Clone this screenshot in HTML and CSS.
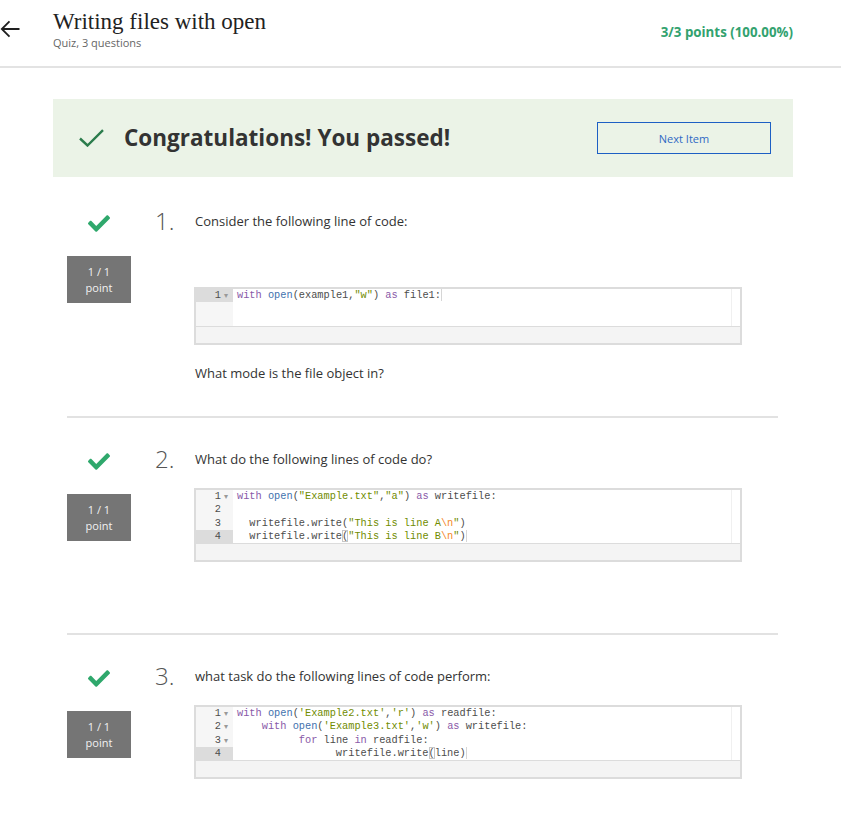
FILE: index.html
```html
<!DOCTYPE html>
<html lang="en">
<head>
<meta charset="utf-8">
<title>Writing files with open</title>
<link rel="stylesheet" href="styles.css">
</head>
<body>
<header class="top">
  <a class="back" aria-label="Back">
    <svg width="20" height="18" viewBox="0 0 20 18"><path d="M19.5 9H1.8M9.5 1.3L1.8 9l7.7 7.7" fill="none" stroke="#1f1f1f" stroke-width="1.8"/></svg>
  </a>
  <div class="title-block">
    <h1 class="title">Writing files with open</h1>
    <div class="subtitle">Quiz, 3 questions</div>
  </div>
  <div class="score">3/3 points (100.00%)</div>
</header>

<main class="main">
  <section class="banner">
    <svg class="banner-check" width="25" height="18" viewBox="0 0 25 18"><polyline points="1,9.5 8.5,16.5 24,1.2" fill="none" stroke="#2b7c4c" stroke-width="2.4"/></svg>
    <h2 class="banner-text">Congratulations! You passed!</h2>
    <button class="next-btn">Next Item</button>
  </section>

  <div class="questions">
    <div class="q">
      <div class="q-side">
        <svg class="q-check" width="22" height="17" viewBox="0 64 512 384"><path fill="#2fa86c" d="M173.9 439.4l-166.4-166.4c-10-10-10-26.2 0-36.2l36.2-36.2c10-10 26.2-10 36.2 0L192 312.7 432.1 72.6c10-10 26.2-10 36.2 0l36.2 36.2c10 10 10 26.2 0 36.2l-294.4 294.4c-10 10-26.2 10-36.2 0z"/></svg>
        <div class="point"><span>1 / 1</span><span>point</span></div>
      </div>
      <div class="q-main">
        <div class="q-head"><span class="q-num">1.</span><div class="q-text">Consider the following line of code:</div></div>
        <div class="q-body">
          <p class="blank"></p>
          <div class="editor">
            <div class="code code-short">
              <div class="gutter">
                <div class="g-cell active"><span>1</span><span class="fold">▾</span></div>
              </div>
              <div class="lines">
                <div class="line"><span class="k">with</span> <span class="f">open</span>(example1,<span class="s">"w"</span>) <span class="k">as</span> file1:<span class="cursor"></span></div>
              </div>
              <div class="scroll"></div>
            </div>
            <div class="ed-foot"></div>
          </div>
          <p class="after">What mode is the file object in?</p>
        </div>
      </div>
    </div>

    <div class="q">
      <div class="q-side">
        <svg class="q-check" width="22" height="17" viewBox="0 64 512 384"><path fill="#2fa86c" d="M173.9 439.4l-166.4-166.4c-10-10-10-26.2 0-36.2l36.2-36.2c10-10 26.2-10 36.2 0L192 312.7 432.1 72.6c10-10 26.2-10 36.2 0l36.2 36.2c10 10 10 26.2 0 36.2l-294.4 294.4c-10 10-26.2 10-36.2 0z"/></svg>
        <div class="point"><span>1 / 1</span><span>point</span></div>
      </div>
      <div class="q-main">
        <div class="q-head"><span class="q-num">2.</span><div class="q-text">What do the following lines of code do?</div></div>
        <div class="q-body">
          <div class="editor">
            <div class="code">
              <div class="gutter">
                <div class="g-cell"><span>1</span><span class="fold">▾</span></div>
                <div class="g-cell"><span>2</span><span class="fold"></span></div>
                <div class="g-cell"><span>3</span><span class="fold"></span></div>
                <div class="g-cell active"><span>4</span><span class="fold"></span></div>
              </div>
              <div class="lines">
                <div class="line"><span class="k">with</span> <span class="f">open</span>(<span class="s">"Example.txt"</span>,<span class="s">"a"</span>) <span class="k">as</span> writefile:</div>
                <div class="line"> </div>
                <div class="line">  writefile.write(<span class="s">"This is line A</span><span class="e">\n</span><span class="s">"</span>)</div>
                <div class="line">  writefile.write<span class="br">(</span><span class="s">"This is line B</span><span class="e">\n</span><span class="s">"</span>)<span class="cursor"></span></div>
              </div>
              <div class="scroll"></div>
            </div>
            <div class="ed-foot"></div>
          </div>
          <p class="after"></p>
        </div>
      </div>
    </div>

    <div class="q">
      <div class="q-side">
        <svg class="q-check" width="22" height="17" viewBox="0 64 512 384"><path fill="#2fa86c" d="M173.9 439.4l-166.4-166.4c-10-10-10-26.2 0-36.2l36.2-36.2c10-10 26.2-10 36.2 0L192 312.7 432.1 72.6c10-10 26.2-10 36.2 0l36.2 36.2c10 10 10 26.2 0 36.2l-294.4 294.4c-10 10-26.2 10-36.2 0z"/></svg>
        <div class="point"><span>1 / 1</span><span>point</span></div>
      </div>
      <div class="q-main">
        <div class="q-head"><span class="q-num">3.</span><div class="q-text">what task do the following lines of code perform:</div></div>
        <div class="q-body">
          <div class="editor">
            <div class="code">
              <div class="gutter">
                <div class="g-cell"><span>1</span><span class="fold">▾</span></div>
                <div class="g-cell"><span>2</span><span class="fold">▾</span></div>
                <div class="g-cell"><span>3</span><span class="fold">▾</span></div>
                <div class="g-cell active"><span>4</span><span class="fold"></span></div>
              </div>
              <div class="lines">
                <div class="line"><span class="k">with</span> <span class="f">open</span>(<span class="s">'Example2.txt'</span>,<span class="s2">'r'</span>) <span class="k">as</span> readfile:</div>
                <div class="line">    <span class="k">with</span> <span class="f">open</span>(<span class="s">'Example3.txt'</span>,<span class="s2">'w'</span>) <span class="k">as</span> writefile:</div>
                <div class="line">          <span class="k">for</span> line <span class="k">in</span> readfile:</div>
                <div class="line">                writefile.write<span class="br">(</span>line)<span class="cursor"></span></div>
              </div>
              <div class="scroll"></div>
            </div>
            <div class="ed-foot"></div>
          </div>
        </div>
      </div>
    </div>
  </div>
</main>
</body>
</html>
```

FILE: styles.css
```css
* { box-sizing: border-box; }

body {
  margin: 0;
  background: #fff;
  font-family: "Open Sans", "Noto Sans", sans-serif;
  color: #333;
}

/* header */
.top {
  display: flex;
  align-items: flex-start;
  height: 68px;
  border-bottom: 2px solid #e3e3e3;
}
.back {
  width: 53px;
  flex: none;
  padding-top: 20px;
  padding-left: 0;
  display: block;
  line-height: 0;
}
.title-block {
  flex: 1;
  padding-top: 9px;
}
.title {
  margin: 0;
  font-family: "Liberation Serif", "DejaVu Serif", serif;
  font-weight: 400;
  font-size: 23px;
  line-height: 26px;
  color: #222;
}
.subtitle {
  margin-top: 0;
  font-size: 11px;
  line-height: 15px;
  color: #666;
}
.score {
  margin-top: 23px;
  padding-right: 48px;
  font-size: 13.3px;
  line-height: 18px;
  font-weight: 700;
  color: #33a26f;
}

/* main */
.main {
  margin-left: 53px;
  width: 740px;
}
.banner {
  margin-top: 31px;
  height: 78px;
  background: #ebf3e7;
  display: flex;
  align-items: center;
  padding: 0 22px 0 26px;
}
.banner-check { flex: none; }
.banner-text {
  margin: 0 auto 0 20px;
  font-size: 22.5px;
  font-weight: 700;
  color: #333;
  line-height: 30px;
}
.next-btn {
  width: 174px;
  height: 32px;
  border: 1px solid #1d5fc4;
  background: transparent;
  font-family: "Open Sans", sans-serif;
  font-size: 11px;
  color: #3069c4;
  padding: 0;
}

/* questions */
.questions {
  margin-left: 14px;
  width: 711px;
  padding-top: 3px;
}
.q {
  display: flex;
  padding-top: 27px;
  border-bottom: 2px solid #e2e2e2;
}
.q:last-child { border-bottom: none; }
.q-side {
  width: 64px;
  flex: none;
  display: flex;
  flex-direction: column;
  align-items: center;
}
.q-check { margin-top: 8px; display: block; }
.point {
  margin-top: 24px;
  width: 64px;
  height: 47px;
  background: #757575;
  color: #f2f2f2;
  font-size: 11px;
  line-height: 16px;
  display: flex;
  flex-direction: column;
  justify-content: center;
  align-items: center;
}
.q-main {
  margin-left: 24px;
  flex: 1;
}
.q-head {
  display: flex;
  align-items: center;
  height: 28px;
}
.q-num {
  width: 40px;
  flex: none;
  font-weight: 300;
  font-size: 24px;
  line-height: 28px;
  color: #555;
}
.q-text {
  font-size: 13px;
  line-height: 20px;
  color: #333;
}
.q-body {
  padding-left: 40px;
  padding-bottom: 33px;
}
.blank { margin: 0; height: 37px; }
.after {
  margin: 18px 0 0;
  height: 20px;
  font-size: 13px;
  line-height: 20px;
  color: #333;
}

/* editor */
.editor {
  margin-top: 15px;
  margin-left: -1px;
  width: 548px;
  border: 2px solid #dcdcdc;
}
.code { display: flex; }
.code-short { min-height: 37px; }
.gutter {
  width: 37px;
  flex: none;
  background: #f6f6f6;
}
.g-cell {
  height: 13.25px;
  display: flex;
  justify-content: flex-end;
  font-family: "Liberation Mono", "DejaVu Sans Mono", monospace;
  font-size: 10.3px;
  line-height: 13.25px;
  color: #4d4d4c;
}
.g-cell.active { background: #dcdcdc; }
.fold {
  width: 12px;
  padding-left: 3px;
  font-family: "DejaVu Sans", sans-serif;
  font-size: 8px;
  color: #999;
  text-align: left;
}
.lines {
  flex: 1;
  padding-left: 4px;
  background: #fff;
}
.line {
  height: 13.25px;
  white-space: pre;
  font-family: "Liberation Mono", "DejaVu Sans Mono", monospace;
  font-size: 10.3px;
  line-height: 13.25px;
  color: #4d4d4c;
}
.k { color: #8959a8; }
.f { color: #4271ae; }
.s { color: #718c00; }
.s2 { color: #718c00; }
.e { color: #f5871f; }
.br { outline: 1px solid #c6c6c6; outline-offset: -1px; }
.cursor {
  display: inline-block;
  width: 0;
  height: 12px;
  border-left: 1px solid #d6d6d6;
  vertical-align: top;
}
.scroll {
  width: 9px;
  flex: none;
  border-left: 1px solid #f0f0f0;
  background: #fff;
}
.ed-foot {
  height: 17px;
  border-top: 1px solid #dcdcdc;
  background: #f4f4f4;
}
```
